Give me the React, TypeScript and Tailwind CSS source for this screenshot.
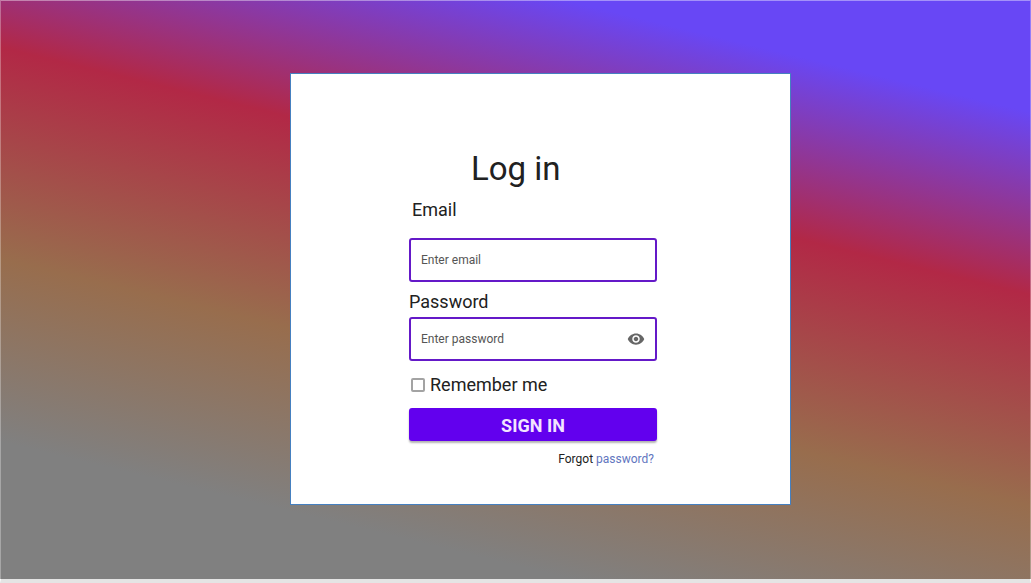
import { useState } from "react";
import { MdVisibility } from "react-icons/md";

const fieldClass =
  "h-11 w-full rounded-[3px] border-2 border-[#6419c8] bg-white pl-[10px] text-xs text-[#333333] outline-none placeholder:text-[#555555]";

export default function App() {
  const [visible, setVisible] = useState(false);

  return (
    <main className="flex min-h-screen items-start justify-center border-x border-t border-b-4 border-x-white/30 border-t-white/40 border-b-[#e4e4e4] bg-[linear-gradient(193.5deg,#6847f5_13.5%,#b22846_35.5%,#986d4d_61%,#808080_83%)] bg-origin-border pt-[72px] pb-[74px] pl-[50px] font-['Roboto',sans-serif] text-[#212121]">
      <section className="w-full max-w-[501px] border border-[#4580c0] bg-white px-[118px] pt-[75px] pb-[37px]">
        <form onSubmit={(e) => e.preventDefault()} className="max-w-[248px]">
          <h1 className="pl-[62px] text-[33px] leading-10">Log in</h1>

          <label htmlFor="email" className="mt-[9px] block px-[3px] text-lg leading-6">
            Email
          </label>
          <input id="email" type="email" placeholder="Enter email" className={`mt-4 ${fieldClass}`} />

          <label htmlFor="password" className="mt-2 block text-lg leading-6">
            Password
          </label>
          <div className="relative mt-[3px]">
            <input
              id="password"
              type={visible ? "text" : "password"}
              placeholder="Enter password"
              className={`pr-10 ${fieldClass}`}
            />
            <button
              type="button"
              aria-label="Show password"
              onClick={() => setVisible(!visible)}
              className="absolute inset-y-0 right-3 flex items-center text-[#666666]"
            >
              <MdVisibility size={18} />
            </button>
          </div>

          <div className="mt-3 flex items-center gap-[5px] px-0.5">
            <input
              id="remember"
              type="checkbox"
              className="size-3.5 appearance-none rounded-[2px] border-2 border-[#a3a3a3] bg-white checked:bg-[#6200ee]"
            />
            <label htmlFor="remember" className="text-lg leading-6">
              Remember me
            </label>
          </div>

          <button
            type="submit"
            className="mt-[11px] block h-[33px] w-full rounded-[3px] bg-[#6200ee] pt-0.5 text-lg leading-6 font-bold text-[#f3e4ff] shadow-[0_2px_2px_rgba(0,0,0,0.3)]"
          >
            SIGN IN
          </button>

          <p className="mt-[10px] px-[3px] text-right text-xs leading-4">
            Forgot{" "}
            <a href="#forgot" className="text-[#6276c0]">
              password?
            </a>
          </p>
        </form>
      </section>
    </main>
  );
}
